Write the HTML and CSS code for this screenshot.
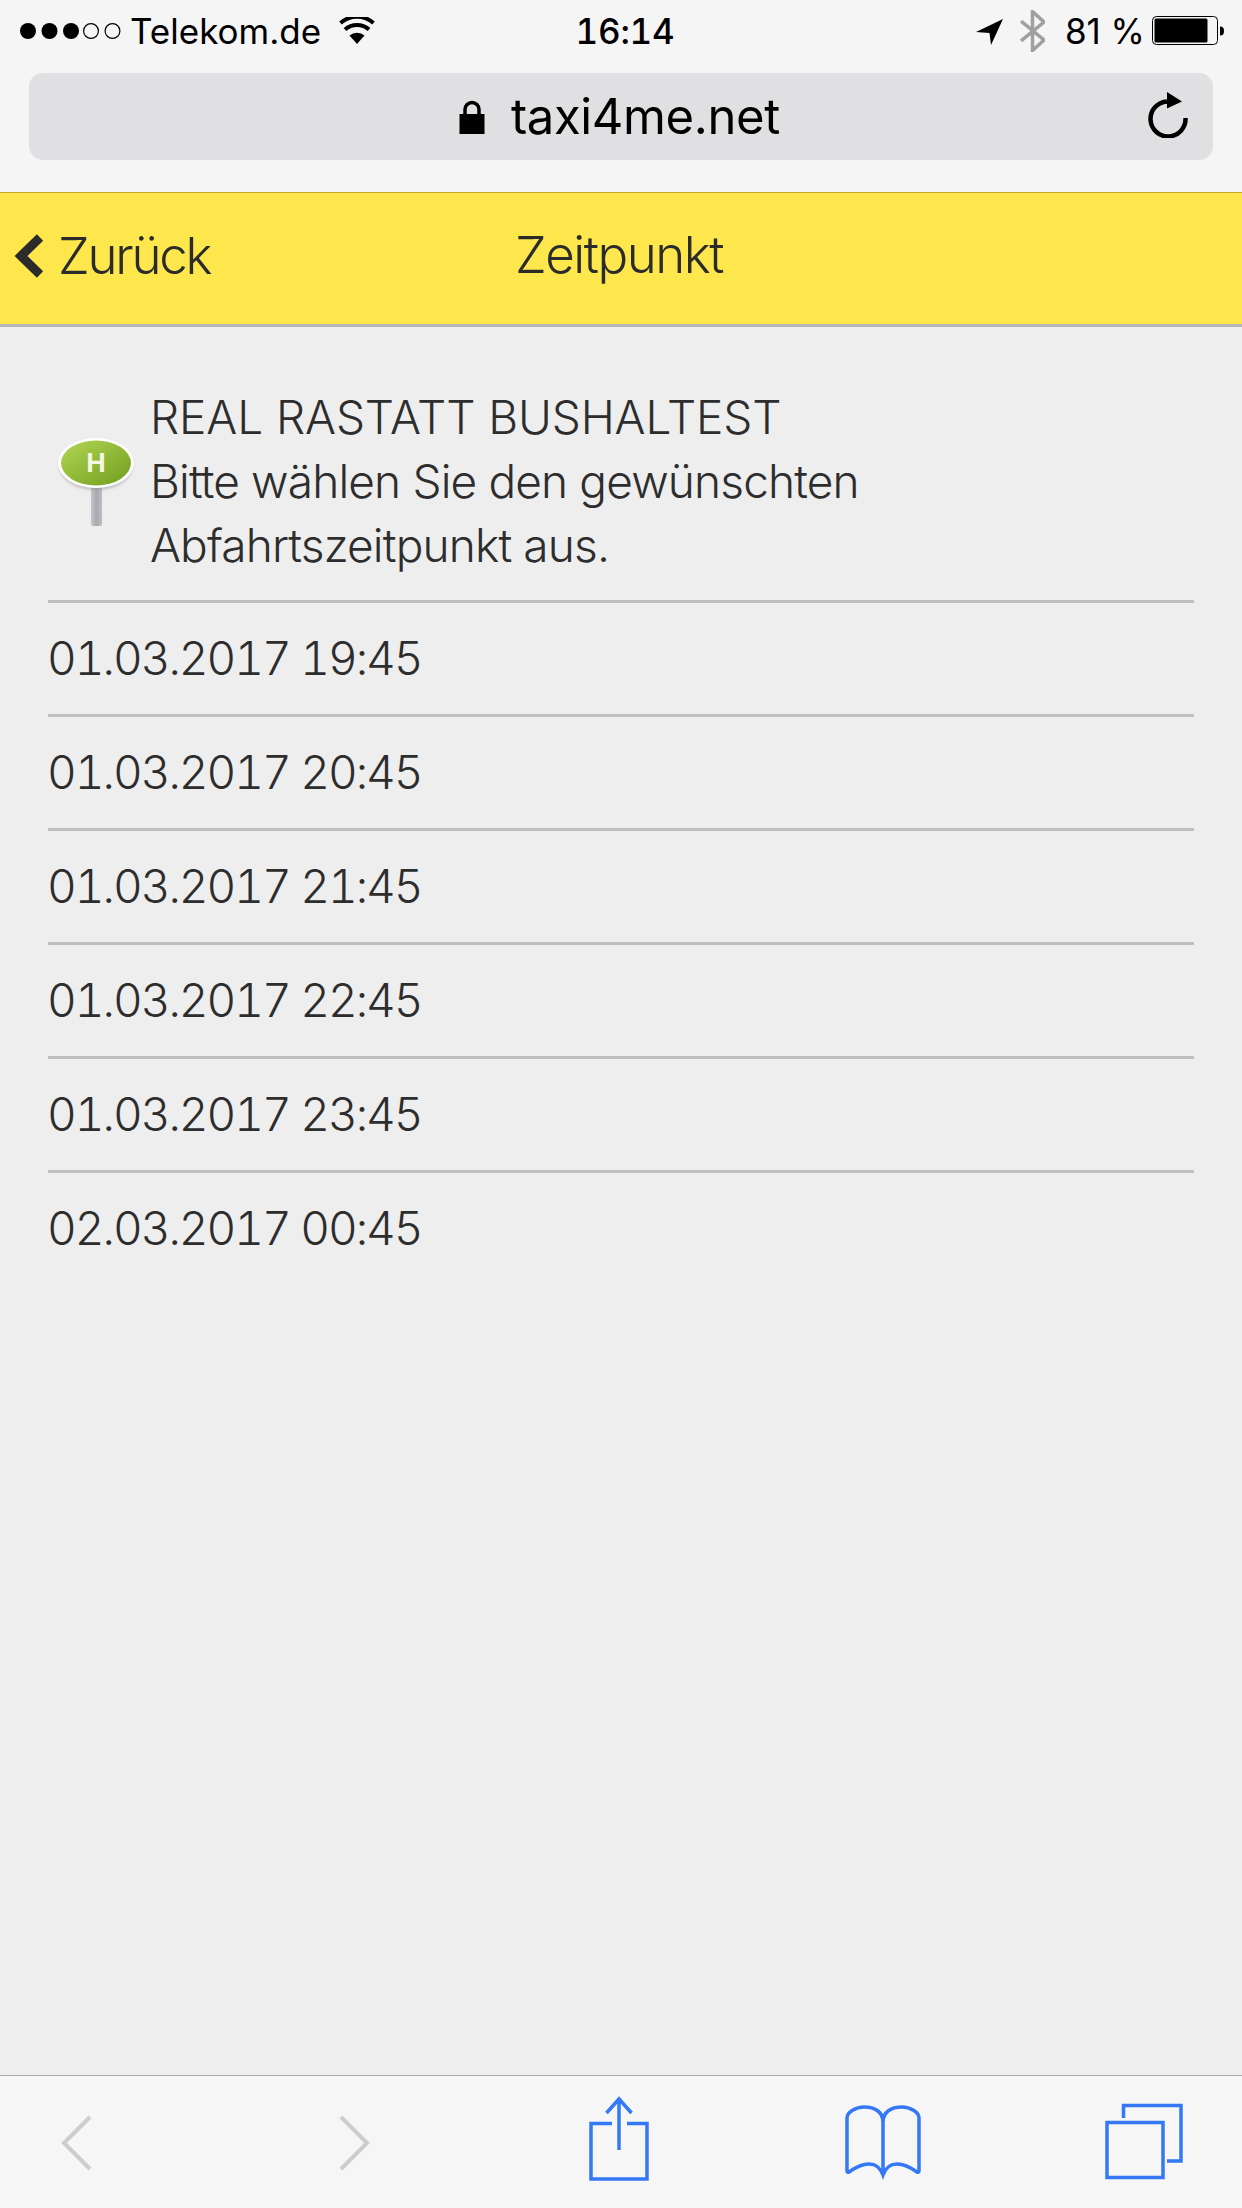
FILE: index.html
```html
<!DOCTYPE html>
<html lang="de">
<head>
<meta charset="utf-8">
<title>Zeitpunkt</title>
<link rel="stylesheet" href="styles.css">
</head>
<body>
<div class="page">

  <div class="browser-top">
    <div class="status">
      <div class="status-left">
        <svg class="dots" width="102" height="20" viewBox="0 0 102 20">
          <circle cx="8" cy="10" r="8"/><circle cx="29.5" cy="10" r="8"/><circle cx="51" cy="10" r="8"/>
          <circle class="off" cx="71" cy="10" r="7.4"/><circle class="off" cx="92.5" cy="10" r="7.4"/>
        </svg>
        <span class="carrier">Telekom.de</span>
        <svg class="wifi" width="36" height="27" viewBox="0 0 36 27">
          <path d="M18 27L10.500 18.500a11.500 11.500 0 0 1 15 0z"/>
          <path class="arc" d="M6 12.500a18 18 0 0 1 24 0"/>
          <path class="arc" d="M1.500 6a25 25 0 0 1 33 0"/>
        </svg>
      </div>
      <div class="time">16:14</div>
      <div class="status-right">
        <svg class="arrow" width="27" height="26" viewBox="0 0 27 26"><path d="M27 0L0 13l13.500 1L15 26z"/></svg>
        <svg class="bt" width="25" height="42" viewBox="0 0 25 42">
          <path d="M1 11l23 19-11.500 10.500V1.500L24 12 1 31"/>
        </svg>
        <span class="batt-text">81 %</span>
        <svg class="battery" width="73" height="30" viewBox="0 0 73 30">
          <rect class="shell" x="0.500" y="0.500" width="65" height="28" rx="4"/>
          <rect x="2.500" y="2.500" width="53" height="24" rx="1.500"/>
          <path d="M68 10.500c3 0 4 1.500 4 4.500s-1 4.500-4 4.500z"/>
        </svg>
      </div>
    </div>

    <div class="urlbar">
      <div class="url">
        <svg class="lock" width="26" height="34" viewBox="0 0 26 34">
          <path class="shackle" d="M6 15V9.500a7 7 0 0 1 14 0V15"/>
          <rect x="0.500" y="14" width="25" height="20"/>
        </svg>
        <span>taxi4me.net</span>
      </div>
      <svg class="reload" width="40" height="46" viewBox="0 0 40 46">
        <path class="ring" d="M19 9.500A17.500 17.500 0 1 0 37.500 26"/>
        <path d="M19 0l15 9.500-15 7z"/>
      </svg>
    </div>
  </div>

  <div class="titlebar">
    <a class="back">
      <svg width="34" height="46" viewBox="0 0 34 46"><path d="M28 4.500L9 23l19 18.500"/></svg>
      <span>Zurück</span>
    </a>
    <div class="title">Zeitpunkt</div>
  </div>

  <div class="content">
    <div class="intro">
      <svg class="pin" width="80" height="92" viewBox="0 0 80 92">
        <defs>
          <linearGradient id="dome" x1="0" y1="0" x2="1" y2="1">
            <stop offset="0" stop-color="#b4d655"/>
            <stop offset="1" stop-color="#6f9d1e"/>
          </linearGradient>
          <linearGradient id="stem" x1="0" y1="0" x2="1" y2="0">
            <stop offset="0" stop-color="#c4c6ca"/>
            <stop offset="0.500" stop-color="#a8aab0"/>
            <stop offset="1" stop-color="#bcbec2"/>
          </linearGradient>
          <filter id="soft"><feGaussianBlur stdDeviation="1.500"/></filter>
        </defs>
        <rect x="35" y="48" width="11" height="41" rx="2" fill="url(#stem)"/>
        <ellipse cx="40" cy="28" rx="37" ry="25" fill="#999" opacity="0.6" filter="url(#soft)"/>
        <ellipse cx="40" cy="26" rx="38" ry="25" fill="#fff"/>
        <ellipse cx="40" cy="26" rx="35" ry="22.500" fill="url(#dome)"/>
        <text x="40" y="35" class="pin-h">H</text>
      </svg>
      <div class="intro-text">
        <span class="stop-name">REAL RASTATT BUSHALTEST</span><br>
        Bitte wählen Sie den gewünschten<br>
        Abfahrtszeitpunkt aus.
      </div>
    </div>
    <ul class="times">
      <li>01.03.2017 19:45</li>
      <li>01.03.2017 20:45</li>
      <li>01.03.2017 21:45</li>
      <li>01.03.2017 22:45</li>
      <li>01.03.2017 23:45</li>
      <li>02.03.2017 00:45</li>
    </ul>
  </div>

  <div class="toolbar">
    <svg class="tool nav nav-back" width="40" height="132" viewBox="0 0 40 132"><path d="M33 41L7 67l26 26"/></svg>
    <svg class="tool nav nav-fwd" width="40" height="132" viewBox="0 0 40 132"><path d="M7 41l26 26-26 26"/></svg>
    <svg class="tool share" width="60" height="132" viewBox="0 0 60 132">
      <path d="M23 47.500H2V103h56V47.500H38"/>
      <path d="M30 74V23M17.500 37L30 23l12.500 14"/>
    </svg>
    <svg class="tool book" width="76" height="132" viewBox="0 0 76 132">
      <path d="M38 99c-3-8-7-11-14-11-7 0-13 3-20 8-1 .7-2 0-2-1V42c0-6 9-11 17-11 11 0 19 5 19 15 0-10 8-15 19-15 8 0 17 5 17 11v53c0 1-1 1.700-2 1-7-5-13-8-20-8-7 0-11 3-14 11zV46"/>
    </svg>
    <svg class="tool tabs" width="78" height="132" viewBox="0 0 78 132">
      <rect x="2" y="46.500" width="56" height="55"/>
      <path d="M18.500 42V29.500H76V85H62"/>
    </svg>
  </div>

</div>
</body>
</html>
```

FILE: styles.css
```css
* {
   box-sizing: border-box;
}

html, body {
   margin: 0;
   padding: 0;
}

body {
   font-family: Inter, "Liberation Sans", sans-serif;
   color: #000;
   background-color: #eee;
}

.page {
   width: 1242px;
   height: 2208px;
   display: flex;
   flex-direction: column;
   overflow: hidden;
}

/* browser chrome */

.browser-top {
   height: 192px;
   background-color: #f5f5f5;
}

.status {
   height: 60px;
   padding-top: 2px;
   display: grid;
   grid-template-columns: 1fr auto 1fr;
   align-items: center;
   font-size: 35px;
}

.status-left {
   display: flex;
   align-items: center;
   padding-left: 20px;
}

.dots circle {
   fill: #000;
}

.dots circle.off {
   fill: none;
   stroke: #000;
   stroke-width: 1.2;
}

.carrier {
   margin-left: 8px;
}

.wifi {
   margin-left: 18px;
   margin-top: -2px;
}

.wifi path {
   fill: #000;
}

.wifi path.arc {
   fill: none;
   stroke: #000;
   stroke-width: 4;
}

.time {
   font-weight: 500;
   font-variant-numeric: tabular-nums;
   letter-spacing: -0.2px;
   padding-left: 8px;
}

.status-right {
   display: flex;
   align-items: center;
   justify-content: flex-end;
   padding-right: 17px;
}

.arrow {
   margin-top: 2px;
}

.bt {
   margin-left: 17px;
}

.bt path {
   fill: none;
   stroke: #a0a0a0;
   stroke-width: 3.500;
}

.batt-text {
   margin-left: 20px;
}

.battery {
   margin-left: 7px;
}

.battery .shell {
   fill: none;
   stroke: #000;
   stroke-width: 1;
}

.urlbar {
   margin: 13px 29px 0 29px;
   height: 87px;
   border-radius: 14px;
   background-color: #e0e0e2;
   display: flex;
   align-items: center;
   padding: 0 25px 0 430px;
   justify-content: space-between;
}

.url {
   display: flex;
   align-items: center;
   font-size: 49px;
   letter-spacing: -0.4px;
}

.url span {
   margin-left: 26px;
}

.lock .shackle {
   fill: none;
   stroke: #000;
   stroke-width: 3.500;
}

.reload {
   margin-bottom: 3px;
}

.reload .ring {
   fill: none;
   stroke: #000;
   stroke-width: 4.500;
}

/* yellow bar */

.titlebar {
   height: 135px;
   padding: 0 4px 8px 0;
   background-color: #fde74c;
   border-top: 1px solid #c2a92f;
   border-bottom: 3px solid #b6b6b6;
   display: flex;
   align-items: center;
   justify-content: center;
   position: relative;
   font-weight: 300;
   font-size: 51px;
   letter-spacing: -1.5px;
   color: #2b2b2b;
}

.back {
   position: absolute;
   left: 12px;
   top: 32px;
   display: flex;
   align-items: center;
   letter-spacing: -2.2px;
}

.back svg path {
   fill: none;
   stroke: #2b2b2b;
   stroke-width: 9;
}

.back span {
   margin-left: 12px;
}

/* content */

.content {
   flex: 1;
   padding: 0 48px;
   font-weight: 300;
   font-size: 46px;
   letter-spacing: -0.85px;
   color: #2d2d2d;
}

.intro {
   display: flex;
   align-items: center;
   height: 276px;
   padding-top: 58px;
   padding-bottom: 23px;
   border-bottom: 3px solid #bfbfbf;
}

.pin {
   margin-left: 8px;
   margin-top: 4px;
   flex: none;
}

.pin-h {
   font-family: "Liberation Sans", sans-serif;
   font-weight: 700;
   font-size: 27px;
   letter-spacing: 0;
   text-anchor: middle;
   fill: #f4f8e0;
}

.intro-text {
   margin-left: 14px;
   line-height: 64px;
   white-space: nowrap;
}

.stop-name {
   letter-spacing: -0.1px;
}

.times {
   list-style: none;
   margin: 0;
   padding: 0;
   font-variant-numeric: tabular-nums;
   letter-spacing: -2px;
}

.times li {
   height: 114px;
   line-height: 111px;
   text-indent: -1px;
   border-bottom: 3px solid #bfbfbf;
}

.times li:last-child {
   border-bottom: none;
}

/* bottom toolbar */

.toolbar {
   height: 133px;
   background-color: #f6f6f6;
   border-top: 1px solid #a8a8a8;
   display: flex;
}

.tool {
   flex: none;
   fill: none;
   stroke: #3478f6;
   stroke-width: 3.500;
}

.nav {
   stroke: #cdcdcd;
   stroke-width: 4;
}

.nav-back {
   margin-left: 57px;
}

.nav-fwd {
   margin-left: 237px;
}

.share {
   margin-left: 215px;
}

.book {
   margin-left: 196px;
}

.tabs {
   margin-left: 184px;
}
```
